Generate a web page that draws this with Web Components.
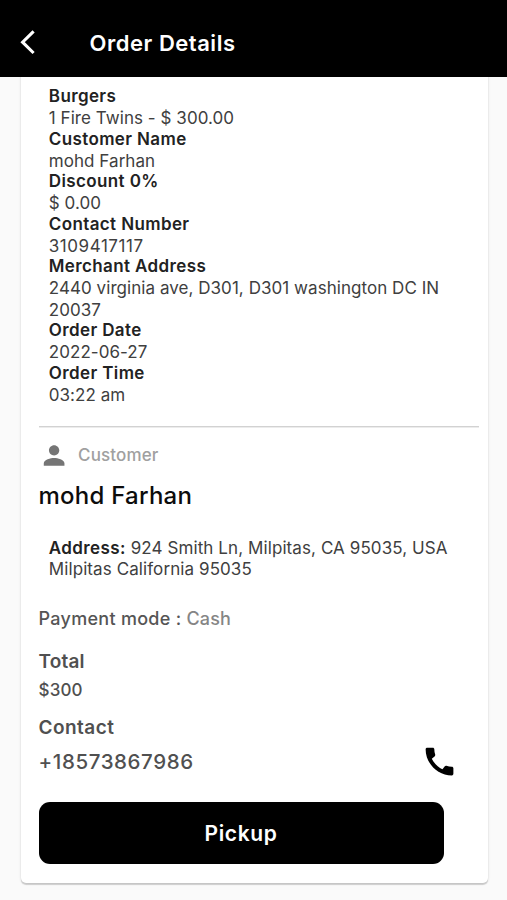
<!DOCTYPE html>
<html lang="en">
<head>
<meta charset="utf-8">
<title>Order Details</title>
<style>
html,body{margin:0;height:100%;overflow:hidden;background:#fafafa}
body{font-family:Inter,"Open Sans",sans-serif;font-kerning:normal}
</style>
</head>
<body>
<order-screen></order-screen>
<script>
const define = (name, html, init) => customElements.define(name, class extends HTMLElement {
  constructor() {
    super();
    const t = document.createElement('template');
    t.innerHTML = html;
    this.attachShadow({ mode: 'open' }).append(t.content.cloneNode(true));
  }
  connectedCallback() { if (init) init(this); }
});

define('app-bar', `<style>
:host{display:flex;height:77px;background:#000;color:#fff;box-sizing:border-box;padding:29px 0 0 19px;align-items:flex-start;position:relative;z-index:1}
svg{width:18px;height:27px;margin-right:52.6px;flex:none}
h1{margin:0;font-size:22px;font-weight:600;line-height:28px;letter-spacing:.52px}
</style>
<svg viewBox="0 0 18 27" fill="none" stroke="#fff" stroke-width="3.1"><path d="M14.6 2.4 3.6 13.2 14.6 24"/></svg>
<h1><slot></slot></h1>`);

define('detail-row', `<style>
:host{display:block;font-size:17px;color:#404040;white-space:nowrap}
.label{font-weight:600;color:#222;line-height:21.2px;letter-spacing:.38px}
.value{line-height:21.3px;padding-top:.8px;margin-bottom:-.8px;letter-spacing:var(--track,.05px)}
.value ::slotted(span){display:block}
</style>
<div class="label"><slot name="label"></slot></div><div class="value"><slot></slot></div>`);

define('person-icon', `<style>:host{display:block;width:31px;height:31px}svg{display:block}</style>
<svg width="31" height="31" viewBox="0.3 0 24 24" fill="#757575"><path d="M12 12c2.21 0 4-1.79 4-4s-1.79-4-4-4-4 1.79-4 4 1.79 4 4 4zm0 2c-2.67 0-8 1.34-8 4v2h16v-2c0-2.66-5.33-4-8-4z"/></svg>`);

define('call-icon', `<style>:host{display:block;width:37px;height:37px}svg{display:block}</style>
<svg width="37" height="37" viewBox="0 0 24 24" fill="#000"><path d="M20.01 15.38c-1.23 0-2.42-.2-3.53-.56a.977.977 0 0 0-1.01.24l-1.57 1.97c-2.83-1.35-5.48-3.9-6.89-6.83l1.95-1.66c.27-.28.35-.67.24-1.02-.37-1.11-.56-2.3-.56-3.53 0-.54-.45-.99-.99-.99H4.19C3.65 3 3 3.24 3 3.99 3 13.28 10.73 21 20.01 21c.71 0 .99-.63.99-1.18v-3.45c0-.54-.45-.99-.99-.99z"/></svg>`);

define('text-line', `<style>
:host{display:block;white-space:nowrap}
</style><slot></slot>`, el => {
  const [size, weight, line, track] = el.getAttribute('type').split(' ');
  Object.assign(el.style, { fontSize: size + 'px', fontWeight: weight, lineHeight: line + 'px', letterSpacing: track + 'px' });
});

define('action-button', `<style>
:host{display:block}
button{all:unset;box-sizing:border-box;display:flex;align-items:center;justify-content:center;width:100%;height:62px;padding-top:1px;border-radius:11px;background:#000;color:#fff;font-size:21px;font-weight:600;letter-spacing:.6px}
</style><button><slot></slot></button>`);

define('order-card', `<style>
:host{display:block;box-sizing:border-box;margin:-7px 19px 0 20.5px;height:812.5px;padding:16.4px 0 0 18px;background:#fff;border-radius:5px;box-shadow:0 1.5px 1px rgba(0,0,0,.17),0 0 3px rgba(0,0,0,.12)}
</style><slot></slot>`);

define('order-screen', `<style>
:host{display:block;height:900px;overflow:hidden;background:#fafafa}
.items{padding-left:10.3px;height:339.6px}
.rule{height:1px;border-bottom:1px solid #ececec;margin-right:9px;background:#d2d2d2}
.customer{display:flex;align-items:center;gap:8.6px;height:31px;margin-top:12.2px;color:#a0a0a0}
.customer text-line{padding-top:.4px}
.name{margin-top:9.4px;color:#0c0c0c}
.address{margin:27.5px 0 0 10.3px;height:42.4px;color:#404040}
.address b{font-weight:600;color:#222;letter-spacing:.4px}
.pay{margin-top:26.6px;color:#555}
.pay span{color:#858585;letter-spacing:.1px}
.total{margin-top:19.4px;color:#505050}
.amount{margin-top:5px;color:#505050}
.contact{margin-top:14.5px;color:#505050}
.phone{display:flex;justify-content:space-between;align-items:flex-start;height:37px;margin-top:3.2px;padding-right:30.5px;color:#505050}
.phone text-line{margin-top:4.6px}
action-button{width:405px;margin-top:22px}
</style>
<app-bar>Order Details</app-bar>
<order-card>
  <div class="items">
    <detail-row><span slot="label">Burgers</span>1 Fire Twins - $ 300.00</detail-row>
    <detail-row><span slot="label">Customer Name</span>mohd Farhan</detail-row>
    <detail-row><span slot="label">Discount 0%</span>$ 0.00</detail-row>
    <detail-row style="--track:.55px"><span slot="label">Contact Number</span>3109417117</detail-row>
    <detail-row><span slot="label">Merchant Address</span><span>2440 virginia ave, D301, D301 washington DC IN</span><span>20037</span></detail-row>
    <detail-row><span slot="label">Order Date</span>2022-06-27</detail-row>
    <detail-row><span slot="label">Order Time</span>03:22 am</detail-row>
  </div>
  <div class="rule"></div>
  <div class="customer"><person-icon></person-icon><text-line type="17 500 31 .12">Customer</text-line></div>
  <text-line class="name" type="24 500 30 .25">mohd Farhan</text-line>
  <text-line class="address" type="17 400 21.2 .09"><b>Address:</b> 924 Smith Ln, Milpitas, CA 95035, USA<br>Milpitas California 95035</text-line>
  <text-line class="pay" type="18 500 24 .29">Payment mode : <span>Cash</span></text-line>
  <text-line class="total" type="19 600 24 .15">Total</text-line>
  <text-line class="amount" type="17 500 22 .15">$300</text-line>
  <text-line class="contact" type="19 600 24 .45">Contact</text-line>
  <div class="phone"><text-line type="20.5 500 28 .6">+18573867986</text-line><call-icon></call-icon></div>
  <action-button>Pickup</action-button>
</order-card>`);
</script>
</body>
</html>
